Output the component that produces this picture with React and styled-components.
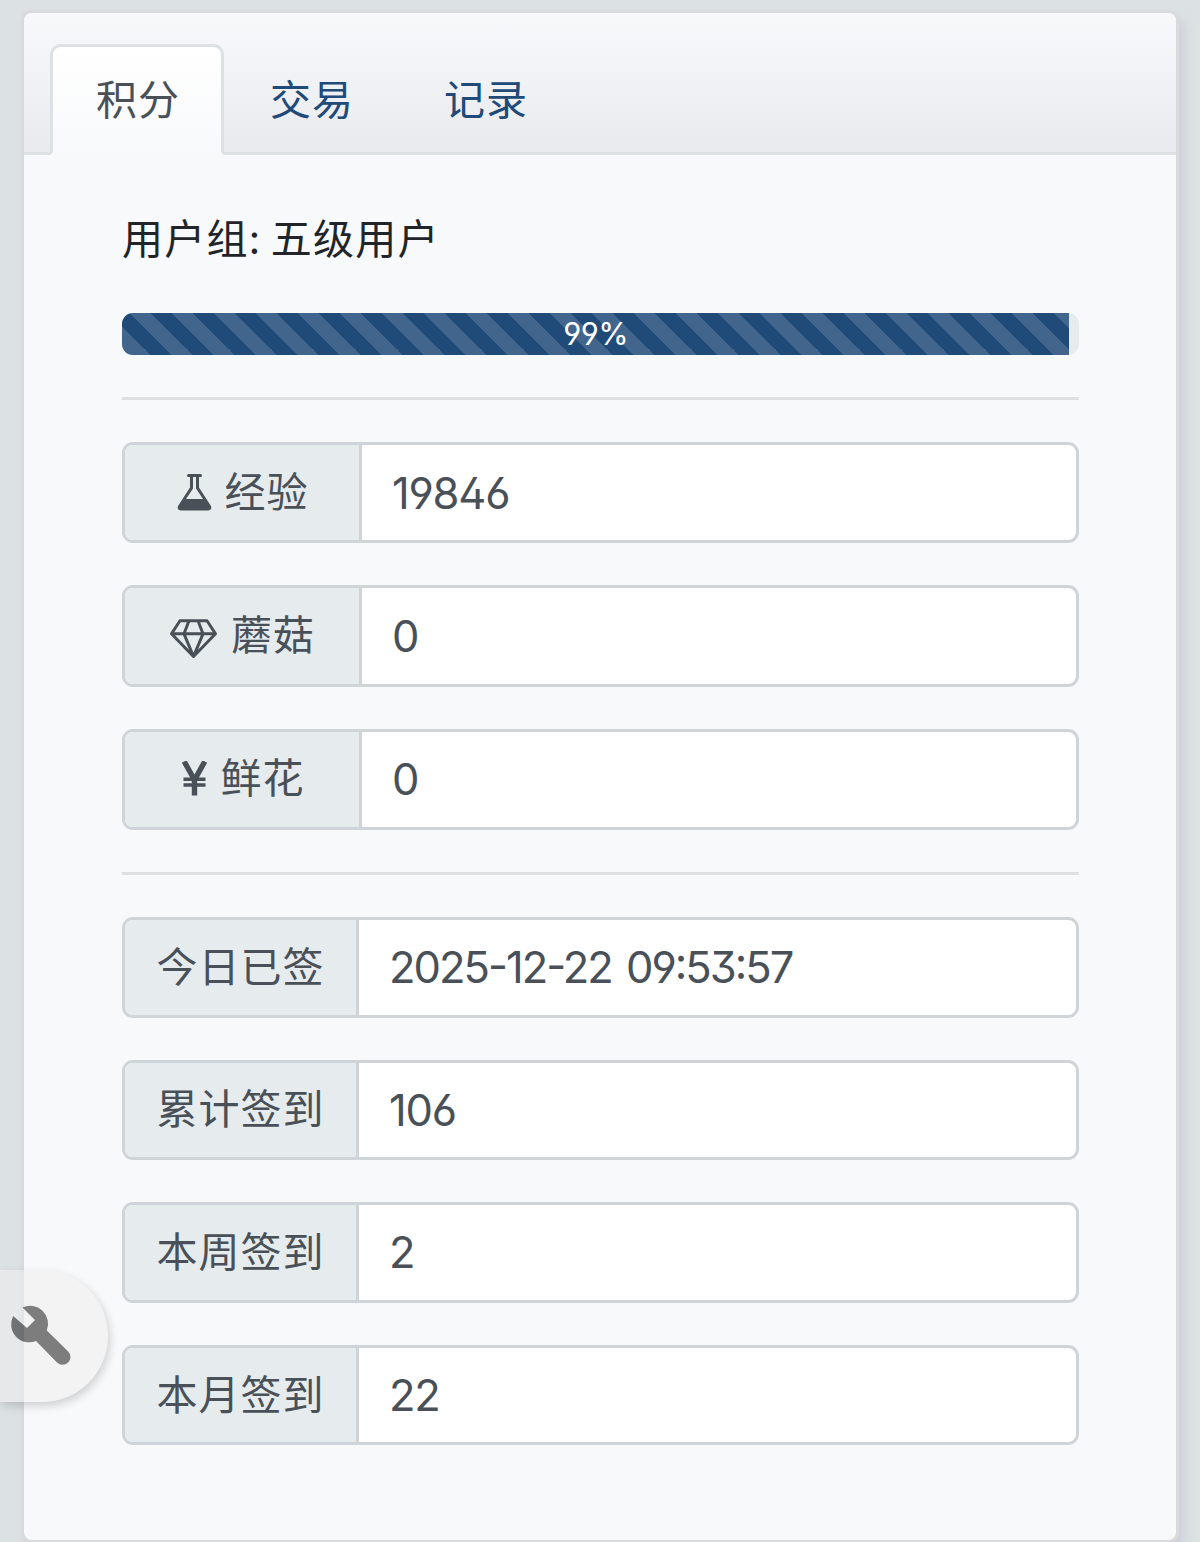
import { createGlobalStyle, styled } from "styled-components";

const tabs = ["积分", "交易", "记录"];

const credits = [
    { label: "经验", value: "19846", icon: "flask" },
    { label: "蘑菇", value: "0", icon: "gem" },
    { label: "鲜花", value: "0", icon: "yen" },
];

const signs = [
    { label: "今日已签", value: "2025-12-22 09:53:57", isDate: true },
    { label: "累计签到", value: "106" },
    { label: "本周签到", value: "2" },
    { label: "本月签到", value: "22" },
];

function CreditIcon({ name }) {
    if (name === "flask") {
        return (
            <svg width="35" height="37" viewBox="0 0 35 37" fill="currentColor">
                <path
                    fillRule="evenodd"
                    d="M11.5 0h12a1.500 1.500 0 0 1 0 3H22v10.500l11.800 18.200c1.400 2.300-.1 4.800-2.600 4.800H3.800c-2.500 0-4-2.500-2.600-4.800L13 13.500V3h-1.500a1.500 1.500 0 0 1 0-3zM16 3v11.400L9 25h17l-7-10.600V3z"
                />
            </svg>
        );
    }
    if (name === "gem") {
        return (
            <svg width="48" height="46" viewBox="0.5 -6 48 46" fill="none" stroke="currentColor" strokeWidth="3" strokeLinejoin="round">
                <path d="M10.5 1.8h27L46 14.800 24 37.500 2 14.800zM2 14.800h44M19.500 1.800L14.500 14.800 24 37.500 33.500 14.800 28.500 1.800" />
            </svg>
        );
    }
    return (
        <svg width="27" height="36" viewBox="0 0 27 36" fill="none" stroke="currentColor">
            <path strokeWidth="5.4" d="M3.200 .5l10.300 18.500L23.800 .5M13.500 18v16.500" />
            <path strokeWidth="3.4" d="M2.500 18.200h22M2.500 24h22" />
        </svg>
    );
}

function WrenchIcon() {
    return (
        <svg width="60" height="60" viewBox="0 0 60 60" fill="currentColor" overflow="visible">
            <path d="M10.5 1.500L23 14 15 22 1.200 10A18 18 0 0 0 24 35L45 56.500A7.800 7.800 0 0 0 56.200 45.400L34.800 24.500A18 18 0 0 0 10.500 1.500z" />
        </svg>
    );
}

export default function App() {
    return (
        <Page>
            <GlobalStyle />
            <Card>
                <Tabs>
                    {tabs.map((tab, i) => (
                        <Tab key={tab} $active={i === 0}>{tab}</Tab>
                    ))}
                </Tabs>
                <Body>
                    <UserGroup>用户组: 五级用户</UserGroup>
                    <Progress>
                        <Bar style={{ width: "99%" }}>99%</Bar>
                    </Progress>
                    <Divider />
                    {credits.map(row => (
                        <Group key={row.label} $height={101.333}>
                            <Label $width={240}>
                                <CreditIcon name={row.icon} />
                                <LabelText>{row.label}</LabelText>
                            </Label>
                            <Value>{row.value}</Value>
                        </Group>
                    ))}
                    <Divider />
                    {signs.map(row => (
                        <Group key={row.label} $height={100.6}>
                            <Label $width={237}>{row.label}</Label>
                            <Value $tight={row.isDate}>{row.value}</Value>
                        </Group>
                    ))}
                </Body>
            </Card>
            <ToolButton aria-label="工具">
                <WrenchIcon />
            </ToolButton>
        </Page>
    );
}

const GlobalStyle = createGlobalStyle`
    * {
        box-sizing: border-box;
    }

    body {
        margin: 0;
        background: #dce1e3;
        color: #212529;
        font: 41px/63px Inter, "Noto Sans CJK SC", sans-serif;
        letter-spacing: 1px;
    }
`;

const Page = styled.div`
    height: 1542px;
    padding: 10px 21px 0;
    overflow: hidden;
`;

const Card = styled.div`
    height: 1533px;
    border: 3px solid #d8dadc;
    border-radius: 11px;
    background: #f8f9fb;
    box-shadow: 5px 8px 10px rgba(195, 195, 215, 0.55);
`;

const Tabs = styled.div`
    display: flex;
    height: 142px;
    padding: 31px 26px 0;
    border-bottom: 3px solid #dce1e3;
    border-radius: 8px 8px 0 0;
    background: linear-gradient(#f8f9fb, #e8eaed);
`;

const Tab = styled.div`
    width: 174px;
    height: 111px;
    padding: 22px 42px 20px 43px;
    border: 3px solid ${p => (p.$active ? "#dce1e3" : "transparent")};
    border-bottom-color: ${p => (p.$active ? "#f8f9fb" : "transparent")};
    border-radius: 11px 11px 0 0;
    background: ${p => (p.$active ? "linear-gradient(#fff, #f8f9fb)" : "none")};
    color: ${p => (p.$active ? "#495057" : "#204a78")};
    white-space: nowrap;
`;

const Body = styled.div`
    padding: 53px 97px 0 98px;
`;

const UserGroup = styled.div`
    height: 63px;
    margin-bottom: 42px;
    letter-spacing: 1.2px;
    word-spacing: -3.5px;
`;

const Progress = styled.div`
    height: 42px;
    border-radius: 11px;
    background: #e6ebee;
    overflow: hidden;
`;

const Bar = styled.div`
    height: 100%;
    background: #204a78 linear-gradient(45deg, rgba(255, 255, 255, 0.15) 25%, transparent 25%, transparent 50%, rgba(255, 255, 255, 0.15) 50%, rgba(255, 255, 255, 0.15) 75%, transparent 75%) 8px 0 / 42px 42px;
    color: #fff;
    font-size: 31px;
    font-feature-settings: "ss01";
    letter-spacing: -0.6px;
    line-height: 42px;
    text-align: center;
`;

const Divider = styled.div`
    height: 3px;
    margin: 42px 0;
    background: #dee0e2;
`;

const Group = styled.div`
    display: flex;
    height: ${p => p.$height}px;
    margin-bottom: 42px;
    border: 3px solid #ced4d8;
    border-radius: 11px;
    background: #fff;
    overflow: hidden;
`;

const Label = styled.div`
    display: flex;
    align-items: center;
    justify-content: center;
    gap: 13px;
    width: ${p => p.$width - 3}px;
    border-right: 3px solid #ced4d8;
    background: #e6ebee;
    color: #495057;
`;

const LabelText = styled.span`
    padding-bottom: 1px;
    margin-right: -1px;
`;

const Value = styled.div`
    display: flex;
    align-items: center;
    padding: 1px 0 0 30px;
    color: #495057;
    font-size: 43.5px;
    font-feature-settings: "ss01", "case";
    letter-spacing: ${p => (p.$tight ? -2 : -1.2)}px;
    word-spacing: 4px;
`;

const ToolButton = styled.button`
    position: fixed;
    top: 1270px;
    left: 0;
    display: flex;
    align-items: center;
    width: 108px;
    height: 132px;
    padding: 0 0 0 12px;
    border: 0;
    border-radius: 0 66px 66px 0;
    background: #efefef;
    box-shadow: 2px 4px 10px rgba(0, 0, 0, 0.3);
    color: #181818;
    opacity: 0.55;
`;
